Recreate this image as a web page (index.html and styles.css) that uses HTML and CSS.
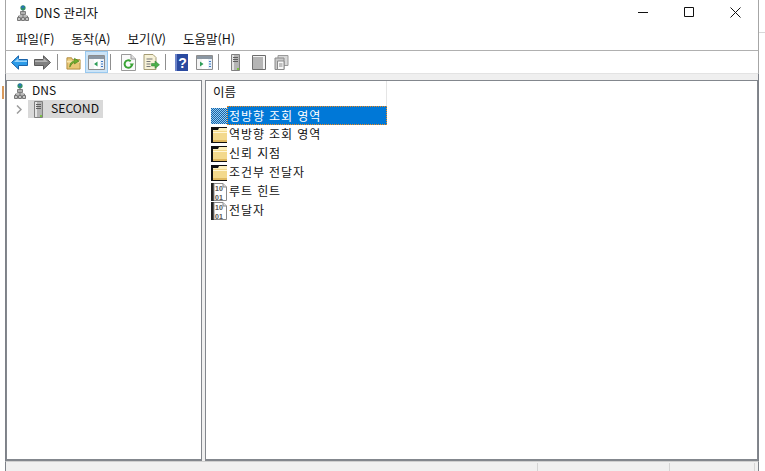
FILE: index.html
```html
<!DOCTYPE html>
<html lang="ko">
<head>
<meta charset="utf-8">
<title>DNS 관리자</title>
<link rel="stylesheet" href="styles.css">
</head>
<body>
<svg class="defs" width="0" height="0" aria-hidden="true">
  <symbol id="netw" viewBox="0 0 12 16">
    <circle cx="6" cy="2.800" r="2.600" fill="#2f8f6a"/>
    <path d="M4.400 1.400 6 .4l1.500 1-1 1.500-1.500.3z" fill="#2a6fc0"/>
    <path d="M5.500 5h1v2h-1z" fill="#777"/>
    <path d="M3.500 6.500h5v3h-5z" fill="#b0b0b0" stroke="#6a6a6a" stroke-width=".8"/>
    <path d="M1.500 11h9M1.500 11v1.500M10.500 11v1.500M6 9.500v3" stroke="#777" fill="none"/>
    <path d="M.5 12.500h3v3h-3zM4.500 12.500h3v3h-3zM8.500 12.500h3v3h-3z" fill="#c4c4c4" stroke="#777"/>
  </symbol>
  <symbol id="server" viewBox="0 0 9 17">
    <path d="M.5.500h8v16h-8z" fill="#b4b4b4" stroke="#808080"/>
    <path d="M1 1h2v15H1z" fill="#e4e4e4"/>
    <path d="M2 3h5v1H2zM2 5h5v1H2zM2 7h5v1H2z" fill="#5f5f5f"/>
    <path d="M6 14h2v2H6z" fill="#7ac143"/>
  </symbol>
  <symbol id="folder" viewBox="0 0 16 16">
    <path d="M0 0h16v16H0z" fill="#111"/>
    <path d="M2 3.500h14V15H2z" fill="#f3d98c"/>
    <path d="M2 3h5l1-2h8v3H2z" fill="#fdf0bd"/>
    <path d="M2 5h14v1H2z" fill="#fff6d4"/>
    <path d="M2 13h14v2H2z" fill="#dfb85e"/>
  </symbol>
  <symbol id="pane" viewBox="0 0 17 15">
    <path d="M.5.500h16v14H.5z" fill="#fff" stroke="#8d8d8d"/>
    <path d="M1 1h15v3H1z" fill="#8b97a3"/>
    <path d="M12 4h4v10h-4z" fill="#e8f0f8"/>
    <path d="M13 6h2v1h-2zM13 8.500h2v1h-2zM13 11h2v1h-2z" fill="#3b78c4"/>
    <path d="M1 4h5v10H1z" fill="#f4f4f4"/>
  </symbol>
</svg>

<div class="screen">
  <div class="gutter">
    <span class="taskmark"></span>
  </div>
  <main class="window">
    <header class="titlebar">
      <div class="title">
        <svg class="title-icon"><use href="#netw"/></svg>
        <span>DNS 관리자</span>
      </div>
      <div class="controls">
        <button class="ctl" aria-label="최소화"><svg width="11" height="11"><path d="M0 5.500h10" stroke="#111"/></svg></button>
        <button class="ctl" aria-label="최대화"><svg width="11" height="11"><path d="M.5.500h9v9h-9z" fill="none" stroke="#111"/></svg></button>
        <button class="ctl" aria-label="닫기"><svg width="11" height="11"><path d="M.5.500l10 10M10.500.500l-10 10" stroke="#111"/></svg></button>
      </div>
    </header>

    <nav class="menubar">
      <span class="menu">파일(F)</span>
      <span class="menu">동작(A)</span>
      <span class="menu">보기(V)</span>
      <span class="menu">도움말(H)</span>
    </nav>

    <div class="toolbar">
      <span class="tool">
        <svg width="17" height="15" viewBox="0 0 17 15"><path d="M.5 7.500 7.500.8v3.700h9v6h-9v3.700z" fill="#2c9be8" stroke="#1a62a8"/><path d="M3 7l4.500-4v2.500H16V7z" fill="#9ad4fa"/></svg>
      </span>
      <span class="tool">
        <svg width="17" height="15" viewBox="0 0 17 15"><path d="M16.500 7.500 9.500.8v3.700h-9v6h9v3.700z" fill="#808080" stroke="#5a5a5a"/><path d="M14 7 9.500 3v2.500H1V7z" fill="#b4b4b4"/></svg>
      </span>
      <span class="sep sep-a"></span>
      <span class="tool">
        <svg width="15" height="15" viewBox="0 0 16 16"><path d="M1 3h5l1 2h8v10H1z" fill="#e9c877" stroke="#b08a3a"/><path d="M1 6h14v2H1z" fill="#f8e6ad"/><path d="M4 13c0-4 1.500-6 5-7V3.500l5 3-5 3V7.800C7 8.300 5.800 10 4 13z" fill="#6fae2e" stroke="#3f7a14" stroke-width=".6"/></svg>
      </span>
      <span class="tool tool-active">
        <svg width="17" height="15"><use href="#pane"/><path d="M9.500 6.500v5L6 9z" fill="#2f9e58"/></svg>
      </span>
      <span class="sep sep-b"></span>
      <span class="tool">
        <svg width="15" height="17" viewBox="0 0 15 17"><path d="M.5.500h9.500l4.500 4.500v11.500H.5z" fill="#fafafa" stroke="#9a9a9a"/><path d="M10 .500V5h4.500" fill="#ddd" stroke="#9a9a9a"/><path d="M11 10a3.700 3.700 0 1 1-1.300-2.800" fill="none" stroke="#3aa335" stroke-width="2"/><path d="M8.500 9.500h4.500l-2 3z" fill="#3aa335"/></svg>
      </span>
      <span class="tool">
        <svg width="17" height="16" viewBox="0 0 16 16"><path d="M.5.500h9l3 3v12h-12z" fill="#f7f2d8" stroke="#a59c74"/><path d="M3 5h6M3 7.500h4M3 10h4M3 12.500h4" stroke="#777"/><path d="M8 9.500h3.500V7l4.500 3.800-4.500 3.700v-2.500H8z" fill="#4bb04a" stroke="#2f7d2e" stroke-width=".5"/></svg>
      </span>
      <span class="sep sep-c"></span>
      <span class="tool">
        <svg width="13" height="17" viewBox="0 0 13 17"><path d="M0 0h13v17H0z" fill="#2a4aa0"/><path d="M0 0h2v17H0z" fill="#6d84c8"/><text x="3.200" y="13.500" class="help-text">?</text></svg>
      </span>
      <span class="tool">
        <svg width="17" height="15"><use href="#pane"/><path d="M4 6.500v5L7.500 9z" fill="#2f9e58"/></svg>
      </span>
      <span class="sep sep-d"></span>
      <span class="tool">
        <svg width="9" height="17"><use href="#server"/></svg>
      </span>
      <span class="tool">
        <svg width="15" height="15" viewBox="0 0 15 15"><path d="M1.500.500h13v14h-13z" fill="#f4f4f4" stroke="#6d6d6d"/><path d="M1 3h11M1 5h11M1 7h11M1 9h11M1 11h11M1 13h11" stroke="#777"/></svg>
      </span>
      <span class="tool">
        <svg width="15" height="15" viewBox="0 0 14 15"><path d="M3.500.500h10v10h-10z" fill="#d8d8d8" stroke="#9a9a9a"/><path d="M.5 3h9v11.500h-9z" fill="#c9c9c9" stroke="#8a8a8a"/><path d="M3 6h6.500v8.500H3z" fill="#f7f7f7" stroke="#8a8a8a"/><path d="M4.500 9h3.500M4.500 11h3.500" stroke="#888"/></svg>
      </span>
    </div>

    <div class="panes">
      <aside class="pane tree">
        <div class="tree-row tree-root">
          <svg class="tree-icon"><use href="#netw"/></svg>
          <span class="tree-label">DNS</span>
        </div>
        <div class="tree-row tree-child">
          <svg class="chevron" width="6" height="9"><path d="M1 .500 5 4.500 1 8.500" fill="none" stroke="#9b9b9b" stroke-width="1.500"/></svg>
          <span class="tree-sel">
            <svg class="srv-icon"><use href="#server"/></svg>
            <span class="tree-label">SECOND</span>
          </span>
        </div>
      </aside>
      <section class="pane list">
        <div class="list-head"><span class="head-cell">이름</span></div>
        <div class="row row-selected">
          <span class="row-icon dither"></span>
          <span class="row-label">정방향 조회 영역</span>
        </div>
        <div class="row"><svg class="row-icon"><use href="#folder"/></svg><span class="row-label">역방향 조회 영역</span></div>
        <div class="row"><svg class="row-icon"><use href="#folder"/></svg><span class="row-label">신뢰 지점</span></div>
        <div class="row"><svg class="row-icon"><use href="#folder"/></svg><span class="row-label">조건부 전달자</span></div>
        <div class="row">
          <svg class="row-icon bin-icon" viewBox="0 0 16 18"><path d="M0 0h3v18H0z" fill="#222"/><path d="M3 .500h9l3.500 3.500v13.500H3z" fill="#fff" stroke="#8a8a8a"/><path d="M12 .500v3.500h3.500" fill="#ddd" stroke="#8a8a8a"/><text x="4" y="8" class="binary-text">10</text><text x="4" y="16.500" class="binary-text">01</text></svg>
          <span class="row-label">루트 힌트</span>
        </div>
        <div class="row">
          <svg class="row-icon bin-icon" viewBox="0 0 16 18"><path d="M0 0h3v18H0z" fill="#222"/><path d="M3 .500h9l3.500 3.500v13.500H3z" fill="#fff" stroke="#8a8a8a"/><path d="M12 .500v3.500h3.500" fill="#ddd" stroke="#8a8a8a"/><text x="4" y="8" class="binary-text">10</text><text x="4" y="16.500" class="binary-text">01</text></svg>
          <span class="row-label">전달자</span>
        </div>
      </section>
    </div>

    <footer class="statusbar">
      <span class="status-cell status-main"></span>
      <span class="status-cell status-b"></span>
      <span class="status-cell status-c"></span>
      <span class="status-cell status-d"></span>
    </footer>
  </main>
  <div class="outside">
    <span class="out-line"></span>
  </div>
</div>
</body>
</html>
```

FILE: styles.css
```css
* { box-sizing: border-box; }
html, body { margin: 0; padding: 0; }
body {
  width: 765px;
  height: 471px;
  overflow: hidden;
  background: #fff;
  font-family: "Noto Sans CJK KR", "Noto Sans", sans-serif;
  font-size: 12px;
  color: #111;
}
.defs { position: absolute; }
.binary-text { font: 700 7px "Liberation Sans", sans-serif; fill: #555; }
.help-text { font: 700 14px "Liberation Sans", sans-serif; fill: #fff; }

.screen { display: flex; height: 471px; }
.gutter { width: 5px; position: relative; background: #fff; flex: none; }
.taskmark {
  position: absolute; left: 2px; top: 86px;
  width: 2px; height: 13px; background: #d9995a;
}
.outside { flex: 1; background: #fff; position: relative; }
.out-line {
  position: absolute; left: 0; right: 0; top: 32px; height: 1px; background: #d8d8d8;
}

.window {
  width: 754px;
  flex: none;
  display: flex;
  flex-direction: column;
  background: #fff;
}

.titlebar, .menubar, .toolbar {
  border-left: 1px solid #a6a6a6;
  border-right: 1px solid #a6a6a6;
}

.titlebar { height: 25px; display: flex; justify-content: space-between; flex: none; }
.title { display: flex; align-items: center; padding-left: 11px; gap: 6px; font-size: 12.500px; }
.title-icon { width: 12px; height: 16px; }
.controls { display: flex; }
.ctl {
  width: 46px; height: 25px; padding: 0; border: 0; background: none;
  display: flex; align-items: center; justify-content: center;
}

.menubar {
  height: 26px; flex: none; display: flex; align-items: center; gap: 17px;
  padding: 2px 0 0 10px; border-bottom: 1px solid #b0b0b0;
}
.menu { font-size: 12.500px; line-height: 16px; }

.toolbar {
  height: 22px; flex: none; display: flex; align-items: center;
  padding-left: 2px;
}
.tool { display: flex; align-items: center; justify-content: center; width: 23px; height: 22px; flex: none; }
.tool svg { display: block; }
.tool-active { background: #cce4f7; border: 1px solid #99c9ef; }
.sep { width: 1px; height: 16px; background: #8f8f8f; flex: none; }
.sep-a { margin: 0 4px 0 3px; }
.sep-b { margin: 0 6px 0 2px; }
.sep-c { margin: 0 4px 0 2px; }
.sep-d { margin: 0 5px 0 2px; }

.panes {
  flex: 1; display: flex; gap: 3px; padding-top: 6px;
  background: #efefef; min-height: 0;
  border-left: 1px solid #7d8188;
  border-right: 1px solid #7d8188;
  border-top: 1px solid #e3e3e3;
}
.pane { background: #fff; border: 1px solid #83878d; border-bottom-width: 2px; }
.tree { width: 196px; flex: none; }
.list { flex: 1; }

.tree-row { height: 18px; display: flex; align-items: center; }
.tree-root { height: 19px; padding-left: 7px; gap: 6px; }
.tree-icon { width: 12px; height: 16px; }
.tree-label { padding-bottom: 2px; }
.tree-child { padding-left: 9px; gap: 6px; }
.tree-sel {
  display: flex; align-items: center; gap: 8px; background: #d9d9d9;
  width: 75px; height: 18px; padding-left: 6px; font-size: 12.200px;
}
.srv-icon { width: 9px; height: 17px; }

.list-head { height: 25px; display: flex; }
.head-cell {
  width: 181px; padding-left: 7px; line-height: 21px; font-size: 12.500px;
  border-right: 1px solid #e5e5e5;
}
.row { height: 19px; display: flex; align-items: center; padding-left: 5px; }
.row-icon { width: 16px; height: 16px; flex: none; }
.bin-icon { height: 18px; }
.row-label { padding: 0 0 2px 2px; letter-spacing: .9px; line-height: 16px; }
.row-selected { width: 181px; }
.row-selected .row-label {
  flex: 1; height: 19px; line-height: 17px; background: #0078d7; color: #fff;
  border: 1px dotted #f08a1c; padding: 0 0 0 1px;
}
.dither {
  background-color: #0078d7;
  background-image: repeating-conic-gradient(#8fd0f5 0 25%, #1b5fa5 0 50%);
  background-size: 2px 2px;
}

.statusbar {
  height: 10px; flex: none; display: flex; background: #f0f0f0;
  border-left: 1px solid #7d8188;
  border-right: 1px solid #7d8188;
  border-top: 1px solid #d0d0d0;
}
.status-cell { border-right: 1px solid #d4d4d4; margin-top: 1px; }
.status-main { width: 532px; }
.status-b { width: 132px; }
.status-c { width: 85px; }
.status-d { flex: 1; border-right: 0; }
```
